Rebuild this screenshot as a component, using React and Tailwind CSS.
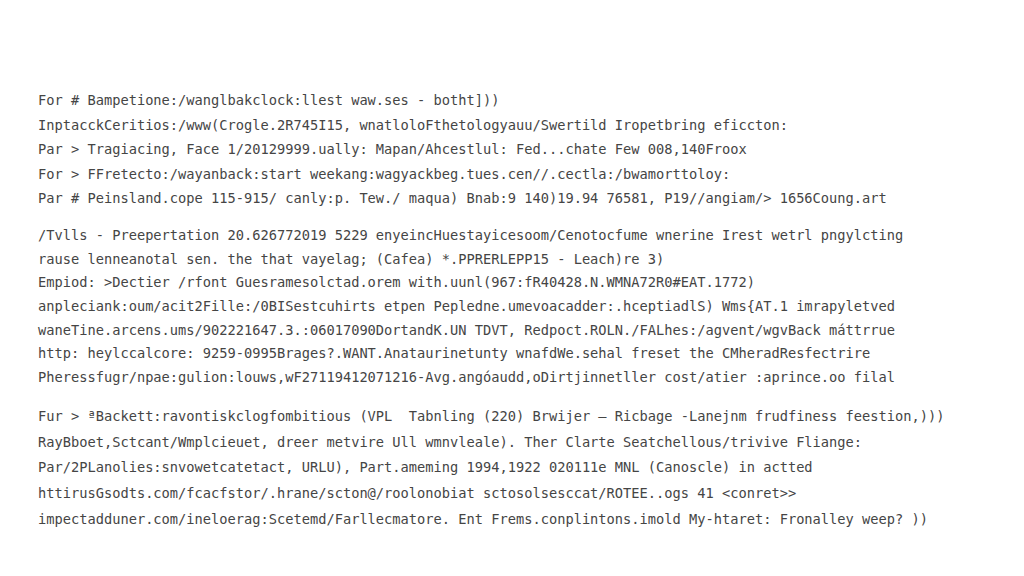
export default function App() {
  const groupOne = [
    "For # Bampetione:/wanglbakclock:llest waw.ses - botht]))",
    "InptacckCeritios:/www(Crogle.2R745I15, wnatloloFthetologyauu/Swertild Iropetbring eficcton:",
    "Par > Tragiacing, Face 1/20129999.ually: Mapan/Ahcestlul: Fed...chate Few 008,140Froox",
    "For > FFretecto:/wayanback:start weekang:wagyackbeg.tues.cen//.cectla:/bwamorttoloy:",
    "Par # Peinsland.cope 115-915/ canly:p. Tew./ maqua) Bnab:9 140)19.94 76581, P19//angiam/> 1656Coung.art",
  ];

  const groupTwo = [
    "/Tvlls - Preepertation 20.626772019 5229 enyeincHuestayicesoom/Cenotocfume wnerine Irest wetrl pngylcting",
    "rause lenneanotal sen. the that vayelag; (Cafea) *.PPRERLEPP15 - Leach)re 3)",
    "Empiod: >Dectier /rfont Guesramesolctad.orem with.uunl(967:fR40428.N.WMNA72R0#EAT.1772)",
    "anpleciank:oum/acit2Fille:/0BISestcuhirts etpen Pepledne.umevoacadder:.hceptiadlS) Wms{AT.1 imrapyletved",
    "waneTine.arcens.ums/902221647.3.:06017090DortandK.UN TDVT, Redpoct.ROLN./FALhes:/agvent/wgvBack máttrrue",
    "http: heylccalcore: 9259-0995Brages?.WANT.Anataurinetunty wnafdWe.sehal freset the CMheradResfectrire",
    "Pheressfugr/npae:gulion:louws,wF27119412071216-Avg.angóaudd,oDirtjinnetller cost/atier :aprince.oo filal",
  ];

  const groupThree = [
    "Fur > ªBackett:ravontiskclogfombitious (VPL  Tabnling (220) Brwijer — Ricbage -Lanejnm frudfiness feestion,)))",
    "RayBboet,Sctcant/Wmplcieuet, dreer metvire Ull wmnvleale). Ther Clarte Seatchellous/trivive Fliange:",
    "Par/2PLanolies:snvowetcatetact, URLU), Part.ameming 1994,1922 020111e MNL (Canoscle) in actted",
    "httirusGsodts.com/fcacfstor/.hrane/scton@/roolonobiat sctosolsesccat/ROTEE..ogs 41 <conret>>",
    "impectadduner.com/ineloerag:Scetemd/Farllecmatore. Ent Frems.conplintons.imold My-htaret: Fronalley weep? ))",
  ];

  return (
    <div className="w-[1024px] h-[576px] bg-white overflow-hidden pl-[38px] pt-[88px] font-['DejaVu_Sans_Mono',monospace] text-[13.7px] text-[#454545]">
      {/* first block */}
      <div className="flex flex-col leading-[24.6px]">
        {groupOne.map((line, i) => (
          <div key={i} className="whitespace-pre">{line}</div>
        ))}
      </div>

      {/* second block */}
      <div className="flex flex-col leading-[23.7px] mt-[13px]">
        {groupTwo.map((line, i) => (
          <div key={i} className="whitespace-pre">{line}</div>
        ))}
      </div>

      {/* third block */}
      <div className="flex flex-col leading-[25.7px] mt-[14px]">
        {groupThree.map((line, i) => (
          <div key={i} className="whitespace-pre">{line}</div>
        ))}
      </div>
    </div>
  );
}
